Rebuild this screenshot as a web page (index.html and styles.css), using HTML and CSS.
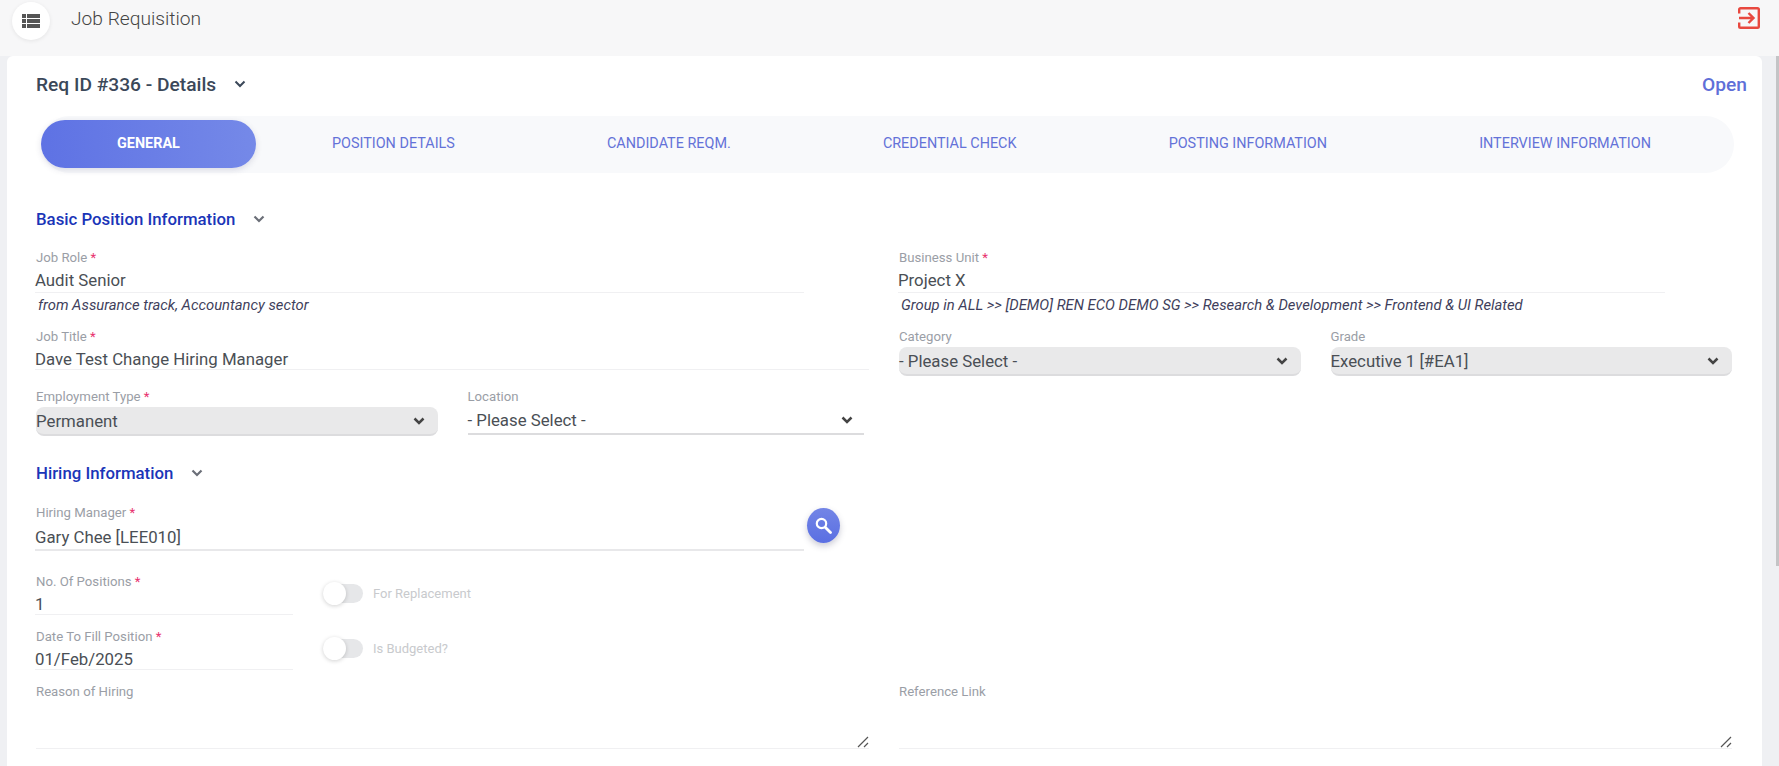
FILE: index.html
```html
<!DOCTYPE html>
<html lang="en">

<head>
    <meta charset="UTF-8">
    <meta name="viewport" content="width=device-width, initial-scale=1.0">
    <title>Job Requisition</title>
    <link rel="stylesheet" href="styles.css">
</head>

<body>
    <header class="topbar">
        <div class="topbar-left">
            <button class="menu-btn" aria-label="Menu">
                <svg width="18" height="14" viewBox="0 0 18 14">
                    <path fill="#555" d="M0 0h4v4H0zM5 0h13v4H5zM0 5h4v4H0zM5 5h13v4H5zM0 10h4v4H0zM5 10h13v4H5z" />
                </svg>
            </button>
            <span class="page-title">Job Requisition</span>
        </div>
        <svg class="logout-icon" width="22" height="22" viewBox="0 0 22 22" fill="none" stroke="#e8483f" stroke-width="2.400">
            <path d="M1.200 6.500V2.500a1.300 1.300 0 0 1 1.300-1.300h17a1.300 1.300 0 0 1 1.300 1.300v17a1.300 1.300 0 0 1-1.300 1.300h-17a1.300 1.300 0 0 1-1.300-1.300v-4" />
            <path d="M1 11h14M10.500 6l5 5-5 5" />
        </svg>
    </header>

    <div class="content">
        <main class="card">
            <div class="card-head">
                <div class="card-title">
                    <span>Req ID #336 - Details</span>
                    <svg class="chevron" width="12" height="8" viewBox="0 0 12 8">
                        <path d="M1.500 1.500 6 6l4.500-4.500" />
                    </svg>
                </div>
                <span class="status">Open</span>
            </div>

            <nav class="tabs">
                <a class="tab active">General</a>
                <a class="tab">Position Details</a>
                <a class="tab">Candidate Reqm.</a>
                <a class="tab">Credential Check</a>
                <a class="tab">Posting Information</a>
                <a class="tab">Interview Information</a>
            </nav>

            <div class="section-title">
                <span>Basic Position Information</span>
                <svg class="chevron gray" width="12" height="8" viewBox="0 0 12 8">
                    <path d="M1.500 1.500 6 6l4.500-4.500" />
                </svg>
            </div>

            <div class="row">
                <div class="col">
                    <div class="field has-note">
                        <label>Job Role <b>*</b></label>
                        <div class="input short">Audit Senior</div>
                        <p class="note">from Assurance track, Accountancy sector</p>
                    </div>
                    <div class="field">
                        <label>Job Title <b>*</b></label>
                        <div class="input thin">Dave Test Change Hiring Manager</div>
                    </div>
                    <div class="row select-row">
                        <div class="field">
                            <label>Employment Type <b>*</b></label>
                            <div class="select filled">
                                <span>Permanent</span>
                                <svg class="chevron dark" width="12" height="8" viewBox="0 0 12 8">
                                    <path d="M1.500 1.500 6 6l4.500-4.500" />
                                </svg>
                            </div>
                        </div>
                        <div class="field">
                            <label>Location</label>
                            <div class="select">
                                <span>- Please Select -</span>
                                <svg class="chevron dark" width="12" height="8" viewBox="0 0 12 8">
                                    <path d="M1.500 1.500 6 6l4.500-4.500" />
                                </svg>
                            </div>
                        </div>
                    </div>
                </div>

                <div class="col">
                    <div class="field has-note">
                        <label>Business Unit <b>*</b></label>
                        <div class="input short">Project X</div>
                        <p class="note">Group in ALL &gt;&gt; [DEMO] REN ECO DEMO SG &gt;&gt; Research &amp; Development &gt;&gt; Frontend &amp; UI Related</p>
                    </div>
                    <div class="row">
                        <div class="field">
                            <label>Category</label>
                            <div class="select filled">
                                <span>- Please Select -</span>
                                <svg class="chevron dark" width="12" height="8" viewBox="0 0 12 8">
                                    <path d="M1.500 1.500 6 6l4.500-4.500" />
                                </svg>
                            </div>
                        </div>
                        <div class="field">
                            <label>Grade</label>
                            <div class="select filled">
                                <span>Executive 1 [#EA1]</span>
                                <svg class="chevron dark" width="12" height="8" viewBox="0 0 12 8">
                                    <path d="M1.500 1.500 6 6l4.500-4.500" />
                                </svg>
                            </div>
                        </div>
                    </div>
                </div>
            </div>

            <div class="section-title second">
                <span>Hiring Information</span>
                <svg class="chevron gray" width="12" height="8" viewBox="0 0 12 8">
                    <path d="M1.500 1.500 6 6l4.500-4.500" />
                </svg>
            </div>

            <div class="row">
                <div class="col">
                    <div class="field manager">
                        <label>Hiring Manager <b>*</b></label>
                        <div class="input short tall">Gary Chee [LEE010]</div>
                        <button class="search-btn" aria-label="Search">
                            <svg width="17" height="17" viewBox="0 0 17 17" fill="none" stroke="#fff">
                                <circle cx="6.500" cy="6.500" r="4.700" stroke-width="2.200" />
                                <path d="m10.200 10.200 5.300 5.300" stroke-width="2.800" stroke-linecap="round" />
                            </svg>
                        </button>
                    </div>
                    <div class="toggle-row">
                        <div class="field">
                            <label>No. Of Positions <b>*</b></label>
                            <div class="input thin">1</div>
                        </div>
                        <div class="toggle">
                            <span class="switch"></span>
                            <span>For Replacement</span>
                        </div>
                    </div>
                    <div class="toggle-row">
                        <div class="field">
                            <label>Date To Fill Position <b>*</b></label>
                            <div class="input thin">01/Feb/2025</div>
                        </div>
                        <div class="toggle">
                            <span class="switch"></span>
                            <span>Is Budgeted?</span>
                        </div>
                    </div>
                </div>
            </div>

            <div class="row">
                <div class="field">
                    <label>Reason of Hiring</label>
                    <div class="textarea">
                        <svg width="12" height="12" viewBox="0 0 12 12" stroke="#555" stroke-width="1.200">
                            <path d="M1 11 11 1M7 11l4-4" />
                        </svg>
                    </div>
                </div>
                <div class="field">
                    <label>Reference Link</label>
                    <div class="textarea">
                        <svg width="12" height="12" viewBox="0 0 12 12" stroke="#555" stroke-width="1.200">
                            <path d="M1 11 11 1M7 11l4-4" />
                        </svg>
                    </div>
                </div>
            </div>
        </main>
        <div class="scroll-thumb"></div>
    </div>
</body>

</html>
```

FILE: styles.css
```css
html,
body {
    height: 100%;
}

body {
    font-family: Roboto, Arial, sans-serif;
    background-color: #eff0f3;
    margin: 0;
    padding: 0;
    overflow: hidden;
    display: flex;
    flex-direction: column;
}

/* top bar */
.topbar {
    flex: none;
    height: 56px;
    background-color: #f7f7f8;
    display: flex;
    justify-content: space-between;
    padding: 2px 19px 0 12px;
    box-sizing: border-box;
}

.topbar-left {
    display: flex;
    align-items: flex-start;
}

.menu-btn {
    width: 38px;
    height: 38px;
    border: none;
    border-radius: 50%;
    background-color: #fff;
    box-shadow: 0 1px 4px rgba(0, 0, 0, 0.08);
    padding: 0;
    display: flex;
    align-items: center;
    justify-content: center;
}

.page-title {
    margin-left: 21px;
    font-size: 19.200px;
    font-weight: 300;
    line-height: 34px;
    color: #444;
}

.logout-icon {
    margin-top: 5px;
}

/* main card */
.content {
    flex: 1;
    position: relative;
    display: flex;
    min-height: 0;
}

.card {
    width: 1755px;
    margin-left: 7px;
    box-sizing: border-box;
    background-color: #fff;
    border-radius: 6px 6px 0 0;
    padding: 16px 30px 0 29px;
    overflow: hidden;
}

.scroll-thumb {
    position: absolute;
    top: 0;
    right: 0;
    width: 3px;
    height: 510px;
    background-color: #c4c4c6;
}

.card-head {
    display: flex;
    justify-content: space-between;
    align-items: center;
    height: 24px;
    margin-right: -15px;
}

.card-title {
    display: flex;
    align-items: center;
    gap: 18px;
    font-size: 19.200px;
    font-weight: 500;
    color: #3b4859;
}

.status {
    font-size: 19.200px;
    font-weight: 500;
    color: #5f6fd8;
}

.chevron {
    fill: none;
    stroke: #3b4859;
    stroke-width: 2;
}

.chevron.gray {
    stroke: #6b6f78;
    stroke-width: 2.200;
}

.chevron.dark {
    stroke: #444;
    stroke-width: 2.500;
}

/* tabs */
.tabs {
    display: flex;
    height: 57px;
    box-sizing: border-box;
    margin: 20px -2px 34px 5px;
    padding: 4px 7px 5px 0;
    background-color: #f8f9fb;
    border-radius: 29px;
}

.tab {
    flex: 1 1 auto;
    display: flex;
    align-items: center;
    justify-content: center;
    padding-bottom: 2px;
    box-sizing: border-box;
    font-size: 14.400px;
    text-transform: uppercase;
    color: #6472d8;
    border-radius: 24px;
}

.tab.active {
    color: #fff;
    font-weight: 700;
    background: linear-gradient(87deg, #5e72e4, #7589e8);
    box-shadow: 0 2px 6px rgba(50, 50, 93, 0.15);
}

/* sections */
.section-title {
    display: flex;
    align-items: center;
    gap: 18px;
    height: 24px;
    margin-bottom: 19px;
    font-size: 16.800px;
    font-weight: 500;
    color: #1a35b8;
}

.section-title.second {
    margin-top: 25px;
    margin-bottom: 20px;
}

.row {
    display: grid;
    grid-template-columns: 1fr 1fr;
    column-gap: 30px;
}

.field {
    position: relative;
}

.field.has-note {
    margin-bottom: 13px;
}

label {
    display: block;
    font-size: 13.200px;
    line-height: 16px;
    color: #9a9ea6;
}

label b {
    font-weight: 400;
    color: #e8326e;
}

.input {
    height: 24px;
    margin-top: 2px;
    margin-left: -1px;
    line-height: 25px;
    font-size: 16.800px;
    color: #4a4f55;
    border-bottom: 1px solid #f0f0f2;
}

.input.short {
    margin-right: 65px;
}

.col + .col .input.short {
    margin-right: 67px;
}

.input.tall {
    height: 26px;
    line-height: 28px;
    border-bottom: 2px solid #e8e8ea;
}

.input.thin {
    margin-top: 0;
    line-height: 28px;
}

.note {
    margin: 1px 0 0 2px;
    font-size: 14.800px;
    line-height: 22px;
    font-style: italic;
    color: #3f3f5c;
    white-space: nowrap;
}

.select-row {
    margin-top: 19px;
}

.select {
    height: 28px;
    margin-top: 2px;
    margin-right: 5px;
    box-sizing: border-box;
    display: flex;
    justify-content: space-between;
    align-items: center;
    font-size: 16.800px;
    color: #4a4f55;
    padding: 0 11px 0 0;
    border-bottom: 2px solid #dcdcde;
}

.select.filled {
    height: 29px;
    margin-right: 0;
    padding-right: 13px;
    background-color: #e9e9ea;
    border-radius: 8px;
}

/* hiring block */
.search-btn {
    position: absolute;
    left: 771px;
    top: 3px;
    width: 33px;
    height: 35px;
    border: none;
    border-radius: 50%;
    padding: 0;
    background: linear-gradient(0deg, #5a6fe2, #7385e6);
    box-shadow: 0 3px 6px rgba(50, 50, 93, 0.25);
    display: flex;
    align-items: center;
    justify-content: center;
}

.toggle-row {
    display: grid;
    grid-template-columns: 257px 1fr;
    column-gap: 30px;
    margin-top: 23px;
}

.toggle-row + .toggle-row {
    margin-top: 14px;
}

.toggle {
    display: flex;
    align-items: center;
    gap: 10px;
    height: 24px;
    margin-top: 7px;
    font-size: 13px;
    color: #c8cacd;
}

.switch {
    position: relative;
    width: 40px;
    height: 19px;
    border-radius: 10px;
    background-color: #e6e7e9;
}

.switch::before {
    content: "";
    position: absolute;
    left: 0;
    top: -2px;
    width: 23px;
    height: 23px;
    border-radius: 50%;
    background-color: #fff;
    box-shadow: 0 1px 4px rgba(0, 0, 0, 0.18);
}

.row + .row {
    margin-top: 14px;
}

.textarea {
    height: 49px;
    box-sizing: border-box;
    border-bottom: 1px solid #f0f0f2;
    display: flex;
    justify-content: flex-end;
    align-items: flex-end;
}
```
